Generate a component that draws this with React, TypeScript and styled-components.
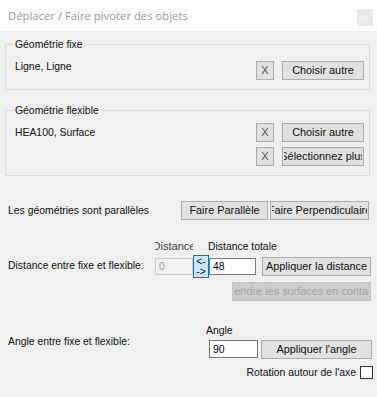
import styled, { createGlobalStyle } from "styled-components";

const GlobalStyle = createGlobalStyle`
  html, body {
    margin: 0;
    padding: 0;
    background: #f0f0f0;
  }
  * {
    box-sizing: border-box;
  }
`;

const Window = styled.div`
  width: 377px;
  height: 397px;
  background: #f0f0f0;
  font-family: "Liberation Sans", Arial, sans-serif;
  font-size: 10.4px;
  line-height: 13px;
  color: #111;
  overflow: hidden;
`;

const TitleBar = styled.div`
  height: 31px;
  background: #fff;
  display: flex;
  align-items: center;
  justify-content: space-between;
  padding: 0 4px 0 8px;
`;

const Title = styled.span`
  font-family: "Open Sans", "Noto Sans", sans-serif;
  font-size: 11.3px;
  color: #9a9a9a;
`;

const CloseBox = styled.div`
  width: 16px;
  height: 17px;
  align-self: flex-start;
  margin-top: 9px;
  background: #e9e9e9;
  display: flex;
  align-items: center;
  justify-content: center;
  color: #f6f6f6;
  font-size: 9px;
`;

const Body = styled.div`
  display: flex;
  flex-direction: column;
  padding: 7px 6px 0 5px;
`;

// group box (WinForms GroupBox)
const Group = styled.fieldset<{ $padTop: number; $mt: number }>`
  margin: ${(p) => p.$mt}px 1px 0 0;
  padding: ${(p) => p.$padTop}px 5px 9px 9px;
  border: 1px solid #dcdcdc;
  min-width: 0;
`;

const Legend = styled.legend`
  padding: 0 2px;
  margin-left: -2px;
  line-height: 13px;
`;

const GroupRow = styled.div`
  display: flex;
  align-items: flex-start;
`;

const GroupLabel = styled.div<{ $top: number }>`
  flex: 1;
  margin-top: ${(p) => p.$top}px;
`;

const ButtonGrid = styled.div`
  display: grid;
  grid-template-columns: 18px 82px;
  column-gap: 8px;
  row-gap: 5px;
`;

const Button = styled.div<{ $w?: number; $h?: number }>`
  width: ${(p) => (p.$w ? `${p.$w}px` : "auto")};
  height: ${(p) => p.$h ?? 19}px;
  background: #e1e1e1;
  border: 1px solid #adadad;
  padding: 0 1px;
  font-size: 10.9px;
  display: flex;
  align-items: center;
`;

// text area of a button: centred, clipped on both sides when too long
const ButtonText = styled.span`
  flex: 1;
  display: flex;
  justify-content: center;
  overflow: hidden;
  white-space: nowrap;
`;

const DisabledButton = styled(Button)`
  background: #cccccc;
  border-color: #c4c4c4;
  color: #a3a3a3;
`;

const ClearButton = styled(Button)`
  color: #555;
  font-size: 11px;
`;

const ParallelRow = styled.div`
  display: flex;
  align-items: center;
  margin-top: 25px;
  padding: 0 2px 0 3px;
`;

const RowLabel = styled.div`
  flex: 1;
  white-space: nowrap;
`;

const ButtonPair = styled.div`
  display: flex;
  gap: 2px;
`;

const DistanceGrid = styled.div`
  display: grid;
  grid-template-columns: 147px 38px 16px 47px 115px;
  grid-template-rows: 13px 23px auto;
  row-gap: 2px;
  margin-top: 20px;
  padding-left: 3px;
`;

const ColHeader = styled.div<{ $col: string; $shift?: number }>`
  grid-column: ${(p) => p.$col};
  grid-row: 1;
  margin-left: ${(p) => p.$shift ?? 0}px;
  white-space: nowrap;
`;

const ClippedHeader = styled.div`
  grid-column: 2;
  grid-row: 1;
  display: flex;
  justify-content: center;
  overflow: hidden;
  white-space: nowrap;
  color: #444;
  font-size: 11px;
`;

const SideLabel = styled.div<{ $row: string; $mb?: number }>`
  grid-column: 1;
  grid-row: ${(p) => p.$row};
  align-self: center;
  margin-bottom: ${(p) => p.$mb ?? 0}px;
  white-space: nowrap;
`;

const TextBox = styled.div<{ $disabled?: boolean; $h?: number }>`
  height: ${(p) => p.$h ?? 17}px;
  align-self: center;
  background: ${(p) => (p.$disabled ? "#f0f0f0" : "#fff")};
  border: 1px solid ${(p) => (p.$disabled ? "#cccccc" : "#7a7a7a")};
  color: ${(p) => (p.$disabled ? "#9d9d9d" : "#000")};
  padding-left: 3px;
  display: flex;
  align-items: center;
`;

const SwapButton = styled.div`
  grid-column: 3;
  grid-row: 2;
  width: 16px;
  height: 23px;
  background: #cce4f7;
  border: 1px solid #0078d7;
  display: flex;
  flex-direction: column;
  align-items: center;
  justify-content: center;
  line-height: 10px;
`;

const Cell = styled.div<{ $col: string; $row: number; $mt?: number; $stretch?: boolean }>`
  grid-column: ${(p) => p.$col};
  grid-row: ${(p) => p.$row};
  justify-self: ${(p) => (p.$stretch ? "stretch" : "end")};
  align-self: center;
  margin-top: ${(p) => p.$mt ?? 0}px;
`;

const AngleGrid = styled.div`
  display: grid;
  grid-template-columns: 201px 49px 114px;
  grid-template-rows: 13px 18px;
  row-gap: 3px;
  margin-top: 23px;
  padding-left: 3px;
`;

const CheckRow = styled.div`
  display: flex;
  justify-content: flex-end;
  align-items: center;
  gap: 4px;
  margin-top: 8px;
  margin-right: -2px;
`;

const CheckBox = styled.div`
  width: 13px;
  height: 13px;
  background: #fff;
  border: 1px solid #333;
`;

export default function App() {
  return (
    <>
      <GlobalStyle />
      <Window>
        <TitleBar>
          <Title>Déplacer / Faire pivoter des objets</Title>
          <CloseBox>≡</CloseBox>
        </TitleBar>
        <Body>
          <Group $padTop={10} $mt={0}>
            <Legend>Géométrie fixe</Legend>
            <GroupRow>
              <GroupLabel $top={-1}>Ligne, Ligne</GroupLabel>
              <ButtonGrid>
                <ClearButton><ButtonText>X</ButtonText></ClearButton>
                <Button><ButtonText>Choisir autre</ButtonText></Button>
              </ButtonGrid>
            </GroupRow>
          </Group>

          <Group $padTop={6} $mt={14}>
            <Legend>Géométrie flexible</Legend>
            <GroupRow>
              <GroupLabel $top={3}>HEA100, Surface</GroupLabel>
              <ButtonGrid>
                <ClearButton><ButtonText>X</ButtonText></ClearButton>
                <Button><ButtonText>Choisir autre</ButtonText></Button>
                <ClearButton><ButtonText>X</ButtonText></ClearButton>
                <Button><ButtonText>Sélectionnez plus</ButtonText></Button>
              </ButtonGrid>
            </GroupRow>
          </Group>

          <ParallelRow>
            <RowLabel>Les géométries sont parallèles</RowLabel>
            <ButtonPair>
              <Button $w={87}><ButtonText>Faire Parallèle</ButtonText></Button>
              <Button $w={99}><ButtonText>Faire Perpendiculaire</ButtonText></Button>
            </ButtonPair>
          </ParallelRow>

          <DistanceGrid>
            <ClippedHeader>Distance</ClippedHeader>
            <ColHeader $col="4 / 6" $shift={-1}>
              Distance totale
            </ColHeader>
            <SideLabel $row="2" $mb={3}>
              Distance entre fixe et flexible:
            </SideLabel>
            <Cell $col="2" $row={2} $stretch>
              <TextBox $disabled>0</TextBox>
            </Cell>
            <SwapButton>
              <span>&lt;-</span>
              <span>-&gt;</span>
            </SwapButton>
            <Cell $col="4" $row={2} $stretch>
              <TextBox>48</TextBox>
            </Cell>
            <Cell $col="5" $row={2}>
              <Button $w={109}><ButtonText>Appliquer la distance</ButtonText></Button>
            </Cell>
            <Cell $col="4 / 6" $row={3} $mt={2}>
              <DisabledButton $w={139}>
                <ButtonText>Rendre les surfaces en contact</ButtonText>
              </DisabledButton>
            </Cell>
          </DistanceGrid>

          <AngleGrid>
            <ColHeader $col="2 / 4" $shift={-3}>
              Angle
            </ColHeader>
            <SideLabel $row="1 / 3">Angle entre fixe et flexible:</SideLabel>
            <Cell $col="2" $row={2} $stretch>
              <TextBox $h={18}>90</TextBox>
            </Cell>
            <Cell $col="3" $row={2}>
              <Button $w={111}><ButtonText>Appliquer l'angle</ButtonText></Button>
            </Cell>
          </AngleGrid>

          <CheckRow>
            <span>Rotation autour de l'axe</span>
            <CheckBox />
          </CheckRow>
        </Body>
      </Window>
    </>
  );
}
